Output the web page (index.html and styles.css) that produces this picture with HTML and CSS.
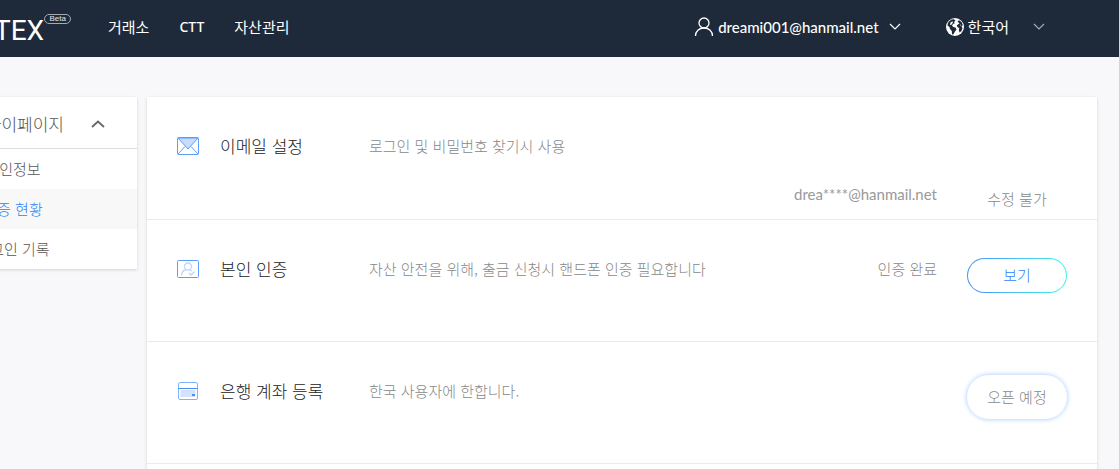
FILE: index.html
```html
<!DOCTYPE html>
<html lang="ko">
<head>
<meta charset="utf-8">
<title>인증 현황</title>
<link rel="stylesheet" href="styles.css">
</head>
<body>
<header class="topbar">
  <a class="logo" href="#"><span class="logo-name">TEX</span><span class="logo-beta">Beta</span></a>
  <nav class="nav">
    <a href="#">거래소</a>
    <a href="#" class="latin">CTT</a>
    <a href="#">자산관리</a>
  </nav>
  <button class="account" type="button">
    <svg width="20" height="20" viewBox="0 0 20 20" fill="none" stroke="#fff" stroke-width="1.3"><circle cx="10" cy="6" r="5"/><path d="M1.500 19c0-4.500 3.500-8 8.500-8s8.500 3.500 8.500 8"/></svg>
    <span class="email">dreami001@hanmail.net</span>
    <svg class="caret" width="12" height="8" viewBox="0 0 12 8" fill="none" stroke="#fff" stroke-width="1.200"><path d="M1 1l5 5 5-5"/></svg>
  </button>
  <button class="language" type="button">
    <svg width="18" height="18" viewBox="0 0 18 18"><circle cx="9" cy="9" r="9" fill="#fff"/><path d="M3 3.500L5.500 1.500 8 1.200 9.500 2.500 8 4 8.800 5.200 7 6 6 7.800 7.500 9 9.800 9.800 10.500 11.500 9 13.500 7.500 16.200 6 16.500 5.800 13 4 11 3.500 9 1.500 7.500C1.500 6 2.200 4.500 3 3.500zM11.500 3.500L13 2.300 15.500 4 16.800 7 15.500 8.500 16.500 10 15.500 13 13.500 14.500 12.800 12 13.300 10 11.500 9.200 10.800 7.500 12.200 6.200 13.500 5.500z" fill="#1e2939"/><path d="M4.500 4.500l2-1.200.4 1.400-1.500 2-1.400.3zM13.700 7l1.500-.5-.3 1.200z" fill="#fff"/></svg>
    <span>한국어</span>
    <svg class="caret-far" width="12" height="8" viewBox="0 0 12 8" fill="none" stroke="#a5a9b0" stroke-width="1.200"><path d="M1 1l5 5 5-5"/></svg>
  </button>
</header>

<div class="page">
  <aside class="sidebar">
    <button class="side-head" type="button">
      <span>마이페이지</span>
      <svg width="14" height="8" viewBox="0 0 14 8" fill="none" stroke="#666" stroke-width="1.800"><path d="M1 7l6-5.500L13 7"/></svg>
    </button>
    <a class="side-item" href="#">개인정보</a>
    <a class="side-item active" href="#">인증 현황</a>
    <a class="side-item" href="#">로그인 기록</a>
  </aside>

  <main class="card">
    <section class="row">
      <svg class="icon" width="22" height="18" viewBox="0 0 22 18" fill="none" stroke="#5b9dfb"><path d="M1 1L11 12 21 1z" fill="#c9dcfd"/><rect x=".5" y=".5" width="21" height="17" rx="1"/><path d="M1 17l7-7.500M21 17l-7-7.500"/></svg>
      <h2 class="title">이메일 설정</h2>
      <p class="desc">로그인 및 비밀번호 찾기시 사용</p>
      <p class="value low">drea****@hanmail.net</p>
      <div class="action"><span class="note">수정 불가</span></div>
    </section>
    <section class="row">
      <svg class="icon" width="22" height="18" viewBox="0 0 22 18" fill="none" stroke="#5b9dfb"><rect x=".5" y=".5" width="21" height="17" rx="1"/><g stroke="#bdd6fd" stroke-width="1.300"><circle cx="11" cy="6.500" r="3.500"/><path d="M4.500 15.500c.3-3 2-5.500 4.500-6M13 10l2 1M12 13l2 2 3.500-3.500"/></g></svg>
      <h2 class="title">본인 인증</h2>
      <p class="desc">자산 안전을 위해, 출금 신청시 핸드폰 인증 필요합니다</p>
      <p class="value">인증 완료</p>
      <div class="action"><button class="view" type="button">보기</button></div>
    </section>
    <section class="row">
      <svg class="icon" width="22" height="18" viewBox="0 0 22 18" fill="none" stroke="#7fb3fc"><rect x="1.500" y=".5" width="19" height="17" rx="1.500"/><path d="M3.500 8h15v7h-15z" fill="#d3e3fd" stroke="none"/><path d="M1.500 6.500h19" stroke="#4a90fa"/><path d="M15 12h3v2h-3z" fill="#4a90fa" stroke="none"/></svg>
      <h2 class="title">은행 계좌 등록</h2>
      <p class="desc">한국 사용자에 한합니다.</p>
      <p class="value"></p>
      <div class="action"><button class="soon" type="button">오픈 예정</button></div>
    </section>
  </main>
</div>
</body>
</html>
```
FILE: styles.css
```css
* { box-sizing: border-box; }

html { overflow: hidden; }

body {
  margin: 0;
  background: #f8f8fa;
  color: #888;
  font: 15px/20px "Noto Sans CJK KR", sans-serif;
  font-weight: 300;
}

a { color: inherit; text-decoration: none; }

button {
  padding: 0;
  border: 0;
  background: none;
  color: inherit;
  font: inherit;
  cursor: pointer;
}

h2, p { margin: 0; font-weight: inherit; }

.topbar {
  display: flex;
  align-items: center;
  height: 57px;
  padding: 0 74px 3px 0;
  background: #1e2939;
  color: #fff;
  font-weight: 400;
}

.logo {
  display: flex;
  width: 114px;
  margin-left: -6px;
  padding-top: 8px;
}

.logo-name {
  font: 400 28px/30px Roboto, sans-serif;
}

.logo-beta {
  height: 10px;
  width: 27px;
  margin-top: -2px;
  border: 1px solid #a5a9b0;
  border-radius: 5px;
  color: #e5e8ec;
  font: 8px/8px "Liberation Sans", sans-serif;
  text-align: center;
}

.nav { display: flex; gap: 30px; flex: 1; }

.latin {
  font-family: "Noto Sans", sans-serif;
  font-size: 14px;
  font-weight: 500;
}

.email {
  font-family: Lato, sans-serif;
  font-weight: 500;
}

.account, .language { display: flex; align-items: center; gap: 4px; }

.account { margin-right: 45px; }

.caret { margin-left: 6px; }

.caret-far { margin-left: 20px; }

.page {
  display: flex;
  align-items: flex-start;
  gap: 10px;
  margin: 40px 22px 0 -111px;
}

.sidebar, .card {
  background: #fff;
  box-shadow: 0 1px 3px rgba(0, 0, 0, 0.15);
}

.sidebar {
  flex: 0 0 248px;
  text-align: center;
  color: #555;
}

.side-head {
  display: flex;
  align-items: center;
  justify-content: flex-end;
  gap: 27px;
  width: 100%;
  height: 52px;
  padding: 2px 32px 0 0;
  border-bottom: 1px solid #ddd;
  font-size: 17px;
}

.side-item {
  display: block;
  line-height: 40px;
}

.side-item.active { background: #f8f8f8; color: #2f7ff8; }

.card { flex: 1; padding: 1px 0 40px; }

.row {
  display: grid;
  grid-template-columns: 43px 149px 1fr auto 100px;
  height: 122px;
  padding: 39px 30px 0;
  border-bottom: 1px solid #ebebeb;
}

.row:first-child { padding-top: 38px; }

.icon { margin-top: 1px; }

.title { color: #222; font-size: 17px; }

.value { margin-right: 30px; }

.value.low {
  padding-top: 48px;
  color: #999;
  font: 15px/20px Lato, sans-serif;
}

.action {
  display: flex;
  align-items: center;
  justify-content: center;
  height: 32px;
}

.note { padding-top: 94px; }

.view {
  width: 100px;
  height: 35px;
  border: 1px solid transparent;
  border-radius: 18px;
  background: linear-gradient(#fff, #fff) padding-box, linear-gradient(90deg, #4a90fa, #46f5e6) border-box;
  color: #2f7ff8;
}

.soon {
  flex: none;
  width: 102px;
  height: 46px;
  border: 1px solid #d3e5ff;
  border-radius: 23px;
  box-shadow: 0 0 4px #bcd8ff;
}
```
